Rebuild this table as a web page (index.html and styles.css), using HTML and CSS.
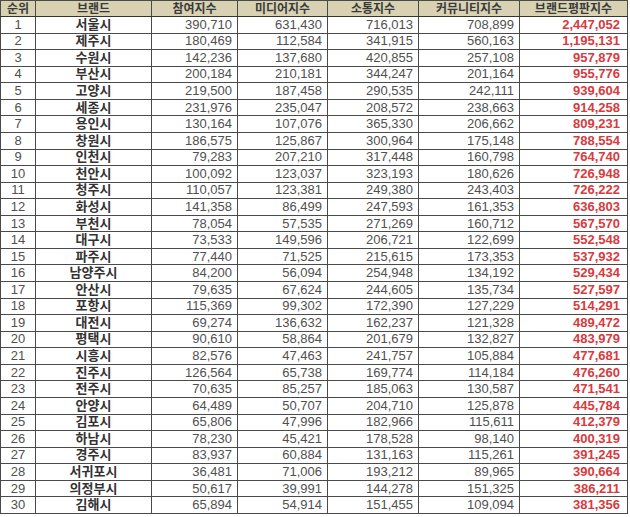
FILE: index.html
```html
<!DOCTYPE html>
<html lang="ko">
<head>
<meta charset="utf-8">
<link rel="stylesheet" href="styles.css">
</head>
<body>
<table class="rank">
<colgroup>
<col class="c-rank"><col class="c-brand"><col class="c-a"><col class="c-b"><col class="c-c"><col class="c-d"><col class="c-e">
</colgroup>
<thead>
<tr><th>순위</th><th>브랜드</th><th>참여지수</th><th>미디어지수</th><th>소통지수</th><th>커뮤니티지수</th><th>브랜드평판지수</th></tr>
</thead>
<tbody>
<tr><td>1</td><td>서울시</td><td>390,710</td><td>631,430</td><td>716,013</td><td>708,899</td><td>2,447,052</td></tr>
<tr><td>2</td><td>제주시</td><td>180,469</td><td>112,584</td><td>341,915</td><td>560,163</td><td>1,195,131</td></tr>
<tr><td>3</td><td>수원시</td><td>142,236</td><td>137,680</td><td>420,855</td><td>257,108</td><td>957,879</td></tr>
<tr><td>4</td><td>부산시</td><td>200,184</td><td>210,181</td><td>344,247</td><td>201,164</td><td>955,776</td></tr>
<tr><td>5</td><td>고양시</td><td>219,500</td><td>187,458</td><td>290,535</td><td>242,111</td><td>939,604</td></tr>
<tr><td>6</td><td>세종시</td><td>231,976</td><td>235,047</td><td>208,572</td><td>238,663</td><td>914,258</td></tr>
<tr><td>7</td><td>용인시</td><td>130,164</td><td>107,076</td><td>365,330</td><td>206,662</td><td>809,231</td></tr>
<tr><td>8</td><td>창원시</td><td>186,575</td><td>125,867</td><td>300,964</td><td>175,148</td><td>788,554</td></tr>
<tr><td>9</td><td>인천시</td><td>79,283</td><td>207,210</td><td>317,448</td><td>160,798</td><td>764,740</td></tr>
<tr><td>10</td><td>천안시</td><td>100,092</td><td>123,037</td><td>323,193</td><td>180,626</td><td>726,948</td></tr>
<tr><td>11</td><td>청주시</td><td>110,057</td><td>123,381</td><td>249,380</td><td>243,403</td><td>726,222</td></tr>
<tr><td>12</td><td>화성시</td><td>141,358</td><td>86,499</td><td>247,593</td><td>161,353</td><td>636,803</td></tr>
<tr><td>13</td><td>부천시</td><td>78,054</td><td>57,535</td><td>271,269</td><td>160,712</td><td>567,570</td></tr>
<tr><td>14</td><td>대구시</td><td>73,533</td><td>149,596</td><td>206,721</td><td>122,699</td><td>552,548</td></tr>
<tr><td>15</td><td>파주시</td><td>77,440</td><td>71,525</td><td>215,615</td><td>173,353</td><td>537,932</td></tr>
<tr><td>16</td><td>남양주시</td><td>84,200</td><td>56,094</td><td>254,948</td><td>134,192</td><td>529,434</td></tr>
<tr><td>17</td><td>안산시</td><td>79,635</td><td>67,624</td><td>244,605</td><td>135,734</td><td>527,597</td></tr>
<tr><td>18</td><td>포항시</td><td>115,369</td><td>99,302</td><td>172,390</td><td>127,229</td><td>514,291</td></tr>
<tr><td>19</td><td>대전시</td><td>69,274</td><td>136,632</td><td>162,237</td><td>121,328</td><td>489,472</td></tr>
<tr><td>20</td><td>평택시</td><td>90,610</td><td>58,864</td><td>201,679</td><td>132,827</td><td>483,979</td></tr>
<tr><td>21</td><td>시흥시</td><td>82,576</td><td>47,463</td><td>241,757</td><td>105,884</td><td>477,681</td></tr>
<tr><td>22</td><td>진주시</td><td>126,564</td><td>65,738</td><td>169,774</td><td>114,184</td><td>476,260</td></tr>
<tr><td>23</td><td>전주시</td><td>70,635</td><td>85,257</td><td>185,063</td><td>130,587</td><td>471,541</td></tr>
<tr><td>24</td><td>안양시</td><td>64,489</td><td>50,707</td><td>204,710</td><td>125,878</td><td>445,784</td></tr>
<tr><td>25</td><td>김포시</td><td>65,806</td><td>47,996</td><td>182,966</td><td>115,611</td><td>412,379</td></tr>
<tr><td>26</td><td>하남시</td><td>78,230</td><td>45,421</td><td>178,528</td><td>98,140</td><td>400,319</td></tr>
<tr><td>27</td><td>경주시</td><td>83,937</td><td>60,884</td><td>131,163</td><td>115,261</td><td>391,245</td></tr>
<tr><td>28</td><td>서귀포시</td><td>36,481</td><td>71,006</td><td>193,212</td><td>89,965</td><td>390,664</td></tr>
<tr><td>29</td><td>의정부시</td><td>50,617</td><td>39,991</td><td>144,278</td><td>151,325</td><td>386,211</td></tr>
<tr><td>30</td><td>김해시</td><td>65,894</td><td>54,914</td><td>151,455</td><td>109,094</td><td>381,356</td></tr>
</tbody>
</table>
</body>
</html>
```
FILE: styles.css
```css
html, body {
  margin: 0;
  padding: 0;
  background: #ffffff;
}
body {
  font-family: "Liberation Sans", "Noto Sans CJK KR", sans-serif;
}
.rank {
  border-collapse: collapse;
  table-layout: fixed;
  width: 627px;
  font-size: 13px;
  line-height: 14px;
}
.c-rank { width: 35px; }
.c-brand { width: 116px; }
.c-a { width: 86px; }
.c-b { width: 90px; }
.c-c { width: 91px; }
.c-d { width: 101px; }
.c-e { width: 108px; }

.rank th, .rank td {
  border: 1px solid #4a4a4a;
  padding: 0 5px;
  white-space: nowrap;
  overflow: hidden;
}
.rank th {
  height: 15px;
  background: #d8d2b2;
  color: #3a3a3a;
  font-weight: 700;
  font-size: 12px;
  text-align: center;
  border-bottom: 1px solid #333;
}
.rank td {
  height: 15.57px;
  color: #505050;
  text-align: right;
}
.rank td:nth-child(1) {
  text-align: center;
  padding: 0;
}
.rank td:nth-child(2) {
  text-align: center;
  font-weight: 700;
  color: #333;
}
.rank td:nth-child(7) {
  color: #d83a3e;
  font-weight: 700;
  padding-right: 7px;
}
```
